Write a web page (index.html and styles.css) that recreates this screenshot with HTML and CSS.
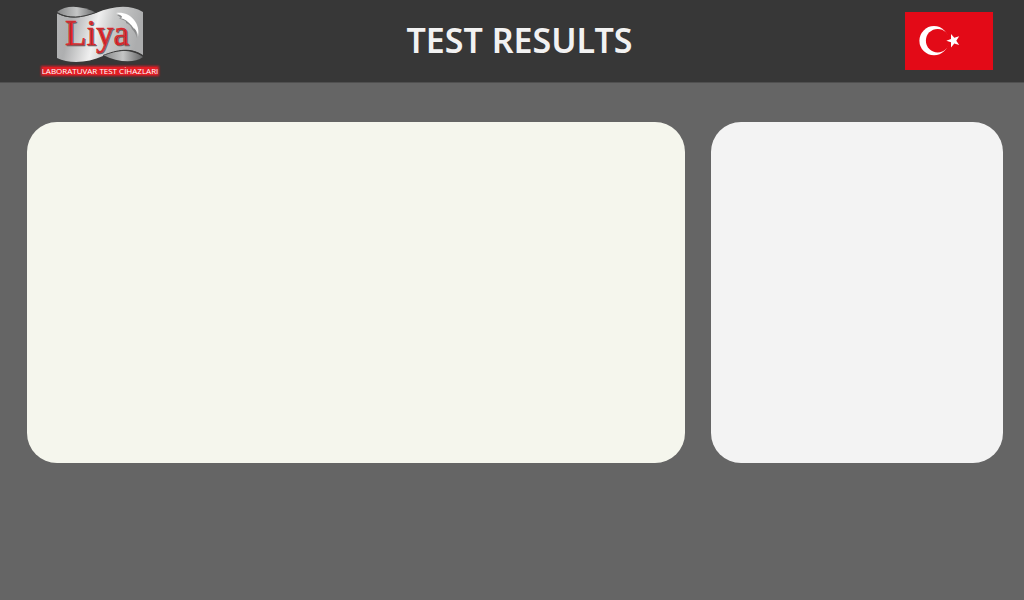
FILE: index.html
```html
<!DOCTYPE html>
<html lang="en">
<head>
<meta charset="utf-8">
<meta name="viewport" content="width=device-width, initial-scale=1">
<title>Test Results</title>
<link rel="stylesheet" href="styles.css">
</head>
<body class="page">
<header class="header">
  <svg class="logo" viewBox="38 3 124 76" role="img" aria-label="Liya Laboratuvar Test Cihazları">
    <defs>
      <linearGradient id="sheet" x1="0" x2="1" y1="0" y2="0.15">
        <stop offset="0" stop-color="#b4b5b6"/>
        <stop offset=".2" stop-color="#aeafb0"/>
        <stop offset=".5" stop-color="#f0f0f0"/>
        <stop offset=".68" stop-color="#c9caca"/>
        <stop offset="1" stop-color="#acadae"/>
      </linearGradient>
      <linearGradient id="fold" x1="0" x2="1" y1="0" y2="0">
        <stop offset="0" stop-color="#858687"/>
        <stop offset=".5" stop-color="#c4c5c5"/>
        <stop offset="1" stop-color="#606162"/>
      </linearGradient>
      <filter id="glow" x="-10%" y="-30%" width="120%" height="160%"><feGaussianBlur stdDeviation="0.8"/></filter>
    </defs>
    <path fill="url(#fold)" d="M57 12C66 5 80 5 97 13C84 18 68 19 57 12Z"/>
    <path fill="url(#fold)" d="M103 55C117 50 132 49 143 57C134 64 117 62 103 55Z"/>
    <path fill="url(#sheet)" d="M57 13C68 20 82 18 96 13C113 6 129 4 143 12V55C129 46 116 51 103 56C88 63 69 64 57 58Z"/>
    <path fill="none" stroke="#3b3b3b" stroke-width="1" d="M57 13C68 19 82 18 97 12M103 55.500C117 50 131 47 143 56"/>
    <path fill="#88898a" d="M117 15C127 15 137 23 137 38C136 34 134 31 132 29C131 26 129 24 126 23C127 21 122 19 119 19C122 18 119 16 117 15Z"/>
    <path fill="#fff" d="M116 13C129 11 141 22 138 37C138 33 136 30 134 28C135 31 133 26 128 22C130 24 126 19 120 18C124 18 122 15 116 13Z"/>
    <text class="logo-name" x="65" y="45">Liya</text>
    <rect x="41" y="66" width="118" height="10" fill="#d81d25" filter="url(#glow)"/>
    <rect x="43" y="67" width="114" height="8" fill="#e31e25"/>
    <text class="logo-caption" x="100" y="74">LABORATUVAR TEST CİHAZLARI</text>
  </svg>
  <h1 class="title">TEST RESULTS</h1>
  <button class="language" type="button" aria-label="Türkçe">
    <svg class="flag" viewBox="0 0 88 58" aria-hidden="true">
      <path fill="#e30a17" d="M0 0H88V58H0Z"/>
      <circle cx="29" cy="28.700" r="14.600" fill="#fff"/>
      <circle cx="32.700" cy="28.700" r="11.800" fill="#e30a17"/>
      <path fill="#fff" d="M41.300 28.700L46 27L46 21.900L49.300 25.800L54.200 24.300L51.300 28.700L54.200 32.900L49.300 31.500L46 35.500L46 30.300Z"/>
    </svg>
  </button>
</header>
<main class="content">
  <section class="panel panel-results" aria-label="Results"></section>
  <section class="panel panel-details" aria-label="Details"></section>
</main>
</body>
</html>
```
FILE: styles.css
```css
* {
  box-sizing: border-box;
}

.page {
  margin: 0;
  min-height: 100vh;
  background: #656565;
  font-family: "Noto Sans", sans-serif;
}

.header {
  display: grid;
  grid-template-columns: 1fr auto 1fr;
  align-items: center;
  padding: 3px 31px 3px 38px;
  background: #373737;
  border-bottom: 1px solid #505050;
}

.logo {
  display: block;
  width: 124px;
  height: 76px;
}

.logo-name {
  font-family: "Liberation Serif", serif;
  font-size: 35px;
  font-weight: 400;
  fill: #e31e25;
  stroke: #e31e25;
  stroke-width: 0.5px;
  text-shadow: 1px 1px 0 #666;
}

.logo-caption {
  font-family: "Open Sans", sans-serif;
  font-size: 8px;
  fill: #fff;
  text-anchor: middle;
}

.title {
  margin: 0;
  padding: 0 0 2px 8px;
  color: #f2f2f2;
  font-size: 34px;
  font-weight: 600;
  line-height: 40px;
}

.language {
  justify-self: end;
  padding: 0;
  border: 0;
  background: none;
  cursor: pointer;
}

.flag {
  display: block;
  width: 88px;
  height: 58px;
}

.content {
  display: grid;
  grid-template-columns: 658fr 292fr;
  gap: 26px;
  padding: 39px 21px 39px 27px;
}

.panel {
  min-height: 341px;
  border-radius: 30px;
}

.panel-results {
  background: #f5f6ed;
}

.panel-details {
  background: #f3f3f3;
}
```
